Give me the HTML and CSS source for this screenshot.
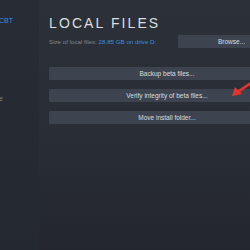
FILE: index.html
```html
<!DOCTYPE html>
<html lang="en">
<head>
  <meta charset="UTF-8" />
  <meta name="viewport" content="width=device-width, initial-scale=1.0"/>
  <title>Properties - Local Files</title>
  <link rel="stylesheet" href="styles.css">
</head>
<body>
  <div class="window">
    <div class="sidebar">
      <div class="side-item active">CBT</div>
      <div class="side-item muted">e</div>
    </div>

    <div class="main">
      <h1>LOCAL FILES</h1>

      <div class="size-row">
        <p class="size">Size of local files: <span class="link">28.85 GB on drive D:</span></p>
        <button class="btn browse">Browse...</button>
      </div>

      <div class="actions">
        <button class="btn">Backup beta files...</button>
        <button class="btn">Verify integrity of beta files...</button>
        <button class="btn">Move install folder...</button>
      </div>

      <svg class="arrow" width="22" height="18" viewBox="0 0 22 18">
        <line x1="20" y1="2" x2="8" y2="10" stroke="#e8332c" stroke-width="2.6" stroke-linecap="round"/>
        <polygon points="1,15 4,6 11,13" fill="#e8332c"/>
      </svg>
    </div>
  </div>
</body>
</html>
```

FILE: styles.css
```css
body {
  margin: 0;
  width: 250px;
  height: 250px;
  overflow: hidden;
  font-family: "Liberation Sans", Arial, sans-serif;
  background: #23262e;
}
.window {
  display: flex;
  height: 250px;
}
.sidebar {
  width: 39px;
  flex-shrink: 0;
  background: linear-gradient(to bottom, #282c34, #242830);
  padding-top: 17px;
}
.side-item {
  font-size: 7px;
  height: 8px;
  line-height: 8px;
  margin-left: -1px;
}
.side-item.active {
  color: #3b8fdc;
}
.side-item.muted {
  color: #7c828b;
  margin-top: 70px;
}
.main {
  position: relative;
  flex: 1;
  min-width: 236px;
  padding-left: 10px;
  padding-top: 15px;
  background: linear-gradient(to bottom, #2c3039 0%, #292d35 55%, #23262e 100%);
}
h1 {
  margin: 0;
  font-size: 14px;
  line-height: 16px;
  font-weight: normal;
  letter-spacing: 2.1px;
  color: #dcdedf;
}
.size-row {
  display: flex;
  align-items: center;
  justify-content: space-between;
  width: 236px;
  margin-top: 4px;
}
.size {
  margin: 0;
  font-size: 6.2px;
  white-space: nowrap;
  color: #7f8791;
}
.link {
  color: #3b8fdc;
}
.btn {
  display: block;
  flex-shrink: 0;
  height: 13px;
  padding: 0;
  border: none;
  border-radius: 1px;
  background: #3d4450;
  color: #dcdedf;
  font-family: "Liberation Sans", Arial, sans-serif;
  font-size: 6.5px;
  white-space: nowrap;
  text-align: center;
}
.browse {
  width: 107px;
}
.actions {
  display: flex;
  flex-direction: column;
  gap: 9px;
  width: 236px;
  margin-top: 19px;
}
.actions .btn {
  width: 236px;
  height: 13px;
}
.arrow {
  position: absolute;
  left: 192px;
  top: 81px;
}
```
